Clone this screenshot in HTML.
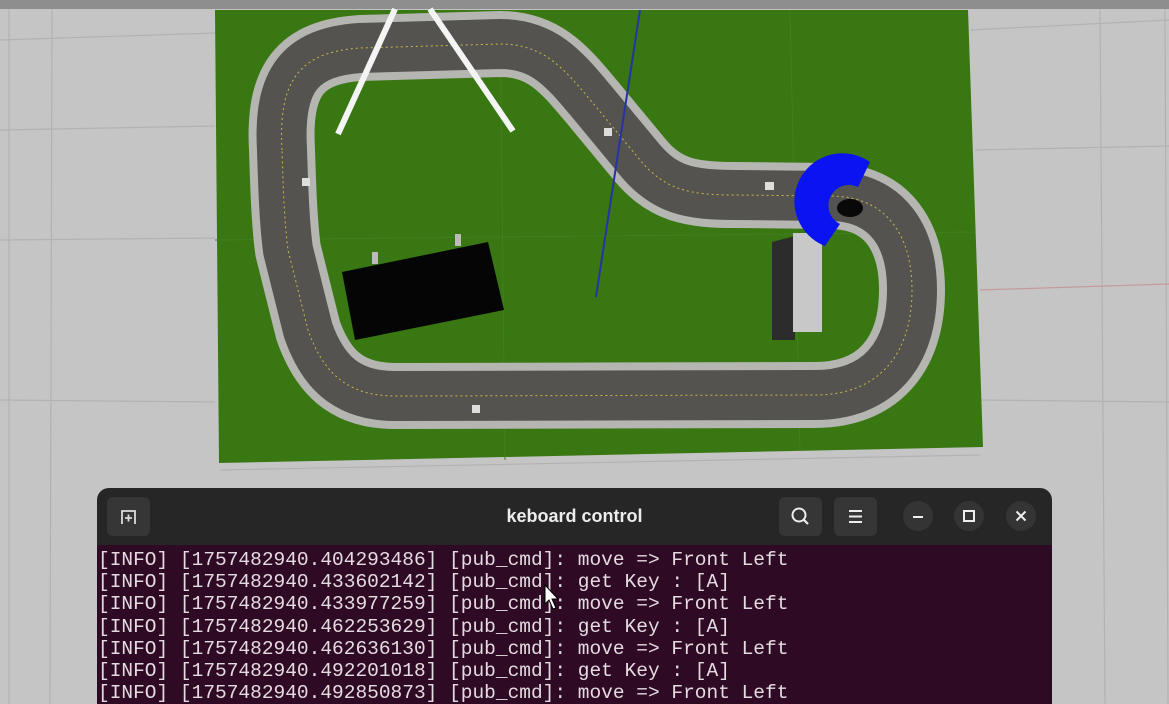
<!DOCTYPE html>
<html><head><meta charset="utf-8"><style>
body{margin:0;width:1169px;height:704px;overflow:hidden;background:#c5c5c5;position:relative;font-family:"Liberation Sans",sans-serif}
svg{position:absolute;left:0;top:0}
.term{position:absolute;left:97px;top:488px;width:955px;height:216px;border-radius:12px 12px 0 0;background:#262626;overflow:hidden}
.hdr{height:57px;position:relative}
.body{background:#2f0a24;height:160px;padding:0 0 0 1px}
.body pre{margin:0;font-family:"Liberation Mono",monospace;font-size:19.5px;line-height:22.2px;color:#e4dbe0;padding-top:4px}
.btn{position:absolute;top:9px;width:43px;height:39px;background:#363636;border-radius:6px}
.cb{position:absolute;top:13px;width:30px;height:30px;border-radius:50%;background:#343434}
.title{position:absolute;left:0;right:0;top:18px;text-align:center;color:#ececec;font-weight:bold;font-size:18px}
</style></head><body>
<svg width="1169" height="704">
 <rect x="0" y="0" width="1169" height="9" fill="#8e8e8e"/>
 <g stroke="#b2b2b2" stroke-width="1.2">
  <line x1="9" y1="9" x2="9" y2="704"/><line x1="52" y1="9" x2="50" y2="704"/>
  <line x1="1100" y1="9" x2="1105" y2="704"/><line x1="1165" y1="9" x2="1168" y2="704"/>
  <line x1="0" y1="40" x2="215" y2="33"/><line x1="0" y1="130" x2="215" y2="126"/>
  <line x1="0" y1="240" x2="215" y2="238"/><line x1="0" y1="400" x2="215" y2="402"/>
  <line x1="970" y1="30" x2="1169" y2="20"/><line x1="975" y1="150" x2="1169" y2="146"/>
  <line x1="980" y1="400" x2="1169" y2="402"/><line x1="220" y1="470" x2="980" y2="455"/>
 </g>
 <line x1="980" y1="290" x2="1169" y2="284" stroke="#c49a9a" stroke-width="1.2"/>
 <polygon points="215,10 968,10 983,447 219,463" fill="#387711"/>
 <g stroke="#427f1e" stroke-width="1"><line x1="500" y1="10" x2="505" y2="460"/><line x1="790" y1="10" x2="800" y2="450"/><line x1="215" y1="240" x2="975" y2="232"/></g>
 <path d="M282 150 C278 80,300 52,360 48 L500 44 C545 44,565 70,592 102 L640 160 C665 190,690 195,735 195 L830 196 C890 196,912 240,912 290 C912 355,878 395,815 395 L395 396 C345 396,322 370,308 330 L288 250 C284 220,283 180,282 150 Z" fill="none" stroke="#b5b5b2" stroke-width="66" stroke-linejoin="round"/>
 <path d="M282 150 C278 80,300 52,360 48 L500 44 C545 44,565 70,592 102 L640 160 C665 190,690 195,735 195 L830 196 C890 196,912 240,912 290 C912 355,878 395,815 395 L395 396 C345 396,322 370,308 330 L288 250 C284 220,283 180,282 150 Z" fill="none" stroke="#555350" stroke-width="50" stroke-linejoin="round"/>
 <path d="M282 150 C278 80,300 52,360 48 L500 44 C545 44,565 70,592 102 L640 160 C665 190,690 195,735 195 L830 196 C890 196,912 240,912 290 C912 355,878 395,815 395 L395 396 C345 396,322 370,308 330 L288 250 C284 220,283 180,282 150 Z" fill="none" stroke="#c9b94a" stroke-width="1" stroke-dasharray="2 3"/>
 <line x1="395" y1="9" x2="338" y2="134" stroke="#f4f4f4" stroke-width="6"/>
 <line x1="430" y1="9" x2="513" y2="131" stroke="#f4f4f4" stroke-width="6"/>
 <line x1="640" y1="10" x2="596" y2="297" stroke="#2533a8" stroke-width="2"/>
 <polygon points="342,272 488,242 504,310 355,340" fill="#050505"/>
 <rect x="372" y="252" width="6" height="12" fill="#bbb"/><rect x="455" y="234" width="6" height="12" fill="#bbb"/>
 <polygon points="772,242 795,236 795,340 772,340" fill="#2c2c2c"/>
 <rect x="793" y="233" width="29" height="99" fill="#c8c8c8"/>
 <path d="M870 162 A48 48 0 1 0 825 246 L840 224 A20 20 0 1 1 858 187 Z" fill="#0a14f0"/>
 <ellipse cx="850" cy="208" rx="13" ry="9" fill="#080808"/>
 <rect x="765" y="182" width="9" height="8" fill="#ddd"/><rect x="472" y="405" width="8" height="8" fill="#ddd"/>
 <rect x="604" y="128" width="8" height="8" fill="#ddd"/><rect x="302" y="178" width="8" height="8" fill="#ddd"/>
</svg>
<div class="term">
 <div class="hdr">
  <div class="btn" style="left:10px"><svg width="43" height="39"><path d="M15 27 V14 H28 V27 M18 21 H25 M21.5 17.5 V24.5" stroke="#ddd" stroke-width="1.8" fill="none"/></svg></div>
  <div class="title">keboard control</div>
  <div class="btn" style="left:682px"><svg width="43" height="39"><circle cx="20" cy="18" r="6.5" stroke="#eee" stroke-width="2" fill="none"/><line x1="25" y1="23" x2="29" y2="27" stroke="#eee" stroke-width="2.2"/></svg></div>
  <div class="btn" style="left:737px"><svg width="43" height="39"><path d="M15 14H28M15 19.5H28M15 25H28" stroke="#eee" stroke-width="2"/></svg></div>
  <div class="cb" style="left:806px"><svg width="30" height="30"><line x1="10" y1="16" x2="20" y2="16" stroke="#eee" stroke-width="2"/></svg></div>
  <div class="cb" style="left:857px"><svg width="30" height="30"><rect x="10" y="10" width="10" height="10" stroke="#eee" stroke-width="2" fill="none"/></svg></div>
  <div class="cb" style="left:909px"><svg width="30" height="30"><path d="M10.5 10.5L19.5 19.5M19.5 10.5L10.5 19.5" stroke="#eee" stroke-width="2"/></svg></div>
 </div>
 <div class="body"><pre>[INFO] [1757482940.404293486] [pub_cmd]: move =&gt; Front Left
[INFO] [1757482940.433602142] [pub_cmd]: get Key : [A]
[INFO] [1757482940.433977259] [pub_cmd]: move =&gt; Front Left
[INFO] [1757482940.462253629] [pub_cmd]: get Key : [A]
[INFO] [1757482940.462636130] [pub_cmd]: move =&gt; Front Left
[INFO] [1757482940.492201018] [pub_cmd]: get Key : [A]
[INFO] [1757482940.492850873] [pub_cmd]: move =&gt; Front Left</pre></div>
</div>
<svg width="1169" height="704" style="pointer-events:none"><path d="M545 585 L545 604 L549 600 L553 609 L556 608 L552 599 L558 599 Z" fill="#fff" stroke="#000" stroke-width="1"/></svg>
</body></html>
